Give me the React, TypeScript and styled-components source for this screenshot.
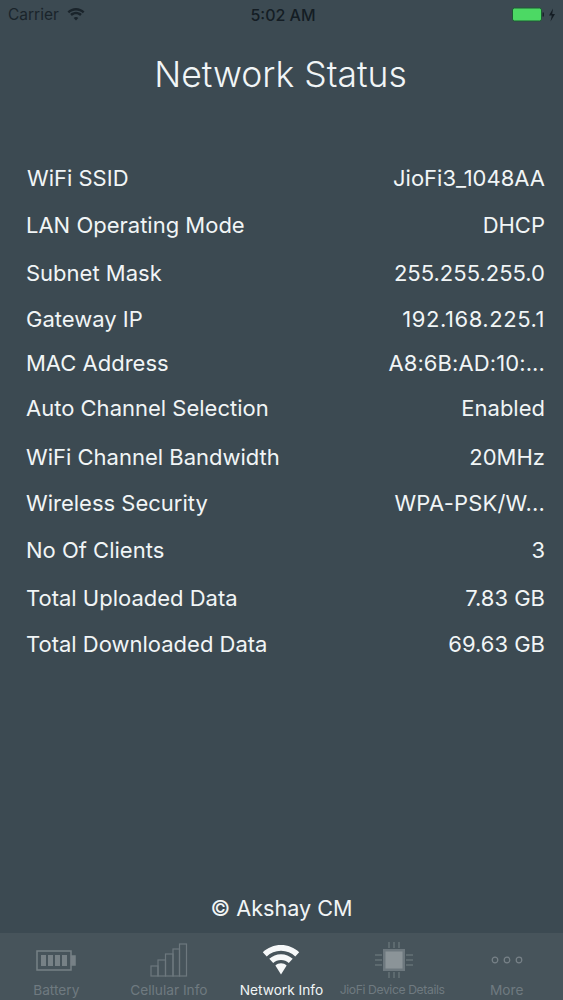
import React, { ReactElement } from 'react'
import styled, { createGlobalStyle } from 'styled-components'

const GlobalStyle = createGlobalStyle`
    html, body {
        margin: 0;
        padding: 0;
        background: #3c4a52;
    }
`

interface Stat {
    label: string;
    value: string;
    height: number;
    spacing?: number;
}

const stats: Stat[] = [
    { label: 'WiFi SSID', value: 'JioFi3_1048AA', height: 47 },
    { label: 'LAN Operating Mode', value: 'DHCP', height: 48 },
    { label: 'Subnet Mask', value: '255.255.255.0', height: 46 },
    { label: 'Gateway IP', value: '192.168.225.1', height: 44, spacing: 0.55 },
    { label: 'MAC Address', value: 'A8:6B:AD:10:...', height: 45, spacing: 0.1 },
    { label: 'Auto Channel Selection', value: 'Enabled', height: 49 },
    { label: 'WiFi Channel Bandwidth', value: '20MHz', height: 46 },
    { label: 'Wireless Security', value: 'WPA-PSK/W...', height: 47, spacing: 0.2 },
    { label: 'No Of Clients', value: '3', height: 48 },
    { label: 'Total Uploaded Data', value: '7.83 GB', height: 46 },
    { label: 'Total Downloaded Data', value: '69.63 GB', height: 45 },
]

const Page = styled.div`
    width: 563px;
    height: 1000px;
    display: flex;
    flex-direction: column;
    overflow: hidden;
    background: #3c4a52;
    font-family: Inter, "Liberation Sans", sans-serif;
    color: #f1f5f6;
`
const StatusBar = styled.div`
    height: 29px;
    display: grid;
    grid-template-columns: 1fr auto 1fr;
    align-items: center;
    padding: 0 5px 0 8px;
    color: #141d24;
    font-size: 15.5px;
`
const Carrier = styled.div`
    display: flex;
    align-items: center;
    gap: 8px;
    color: #1a242b;
`
const Time = styled.div`
    font-size: 16px;
    font-weight: 500;
`
const BatteryArea = styled.div`
    display: flex;
    justify-content: flex-end;
    align-items: center;
`
const Title = styled.h1`
    margin: 21px 0 0;
    padding-right: 2px;
    height: 50px;
    line-height: 50px;
    text-align: center;
    font-size: 35.5px;
    font-weight: 300;
`
const StatList = styled.div`
    margin-top: 63px;
    display: flex;
    flex-direction: column;
    padding: 0 18px 0 26px;
`
const StatRow = styled.div<{ $height: number }>`
    height: ${p => p.$height}px;
    display: flex;
    justify-content: space-between;
    font-size: 22px;
    line-height: 30px;

    &:first-child {
        padding-left: 1px;
    }
`
const StatValue = styled.span<{ $spacing?: number }>`
    letter-spacing: ${p => p.$spacing ?? 0}px;
`
const Footer = styled.div`
    margin-top: auto;
    height: 50px;
    line-height: 50px;
    text-align: center;
    font-size: 21.6px;
`
const TabBar = styled.div`
    height: 67px;
    display: grid;
    grid-template-columns: repeat(5, 1fr);
    background: #47545b;
`
const Tab = styled.div<{ $active?: boolean }>`
    display: flex;
    flex-direction: column;
    align-items: center;
    justify-content: flex-end;
    padding-bottom: 1px;
    color: ${p => (p.$active ? '#f1f5f6' : '#6f7a80')};
`
const TabIcon = styled.div`
    height: 42px;
    display: flex;
    align-items: center;
    justify-content: center;
`
const TabLabel = styled.div`
    font-size: 13.7px;
    line-height: 18px;
    white-space: nowrap;
`
const NarrowLabel = styled(TabLabel)`
    font-size: 12.2px;
    letter-spacing: -0.4px;
    margin-right: 4px;
`

function StatusWifi(): ReactElement {
    return (
        <svg width="18" height="13" viewBox="0 0 18 13" fill="currentColor">
            <path d="M9 2.600c2.600 0 5 1 6.800 2.700L17.500 3.500C15.200 1.300 12.200 0 9 0S2.800 1.300.5 3.500l1.700 1.800C4 3.600 6.400 2.600 9 2.600z" />
            <path d="M9 6.300c1.600 0 3 .6 4.100 1.600l1.700-1.800C13.300 4.700 11.200 3.800 9 3.800s-4.300.9-5.800 2.300l1.700 1.800C6 6.900 7.400 6.300 9 6.300z" />
            <path d="M9 9c-.9 0-1.700.3-2.300.9L9 12.500l2.300-2.600C10.700 9.300 9.900 9 9 9z" />
        </svg>
    )
}

function StatusBattery(): ReactElement {
    return (
        <svg width="46" height="16" viewBox="0 0 46 16">
            <rect x="0.500" y="1" width="29" height="13" rx="2" fill="#4cd964" stroke="#1e5a34" />
            <rect x="30.500" y="5.500" width="1.500" height="4" fill="#1a242b" />
            <path d="M41 1.500l-4 7h2.800L38.500 14.500l4.500-7.500h-2.800z" fill="#141d24" />
        </svg>
    )
}

function BatteryIcon(): ReactElement {
    return (
        <svg width="40" height="21" viewBox="0 0 40 21" fill="none" stroke="#778186" strokeWidth="1.500">
            <rect x="1" y="1" width="34" height="19" />
            <rect x="35.500" y="6" width="3.500" height="9" fill="#778186" />
            <rect x="5" y="5" width="5" height="11" fill="#778186" stroke="none" />
            <rect x="12" y="5" width="5" height="11" fill="#778186" stroke="none" />
            <rect x="19" y="5" width="5" height="11" fill="#778186" stroke="none" />
            <rect x="26" y="5" width="5" height="11" fill="#778186" stroke="none" />
        </svg>
    )
}

function CellularIcon(): ReactElement {
    return (
        <svg width="38" height="34" viewBox="0 0 38 34" fill="none" stroke="#6d787e" strokeWidth="1.200">
            <rect x="1" y="23" width="7" height="10" />
            <rect x="8" y="17" width="7.500" height="16" />
            <rect x="15.500" y="11" width="7.500" height="22" />
            <rect x="23" y="6" width="6.500" height="27" />
            <rect x="29.500" y="1" width="7" height="32" />
        </svg>
    )
}

function WifiIcon(): ReactElement {
    return (
        <svg width="38" height="30" viewBox="0 0 38 30" fill="#f6f8f9">
            <path d="M19 0C12 0 5.600 2.700.8 7.200l3.900 4.200C8.400 7.900 13.400 5.700 19 5.700s10.600 2.200 14.300 5.700l3.900-4.200C32.400 2.700 26 0 19 0z" />
            <path d="M19 9.200c-4.500 0-8.600 1.700-11.700 4.600l3.900 4.200c2-1.900 4.800-3.100 7.800-3.100s5.800 1.200 7.800 3.100l3.900-4.200C27.600 10.900 23.500 9.200 19 9.200z" />
            <path d="M19 18.200c-2.200 0-4.100.8-5.600 2.200L19 29.500l5.600-9.100C23.100 19 21.200 18.200 19 18.200z" />
        </svg>
    )
}

function ChipIcon(): ReactElement {
    return (
        <svg width="40" height="38" viewBox="0 0 40 38" fill="none">
            <rect x="9" y="8" width="22" height="22" fill="#6d787e" />
            <rect x="11.500" y="10.500" width="17" height="17" fill="#8b9498" />
            <path
                d="M15 1v6M20 1v6M25 1v6M15 31v6M20 31v6M25 31v6M1 14h7M1 19h7M1 24h7M32 14h7M32 19h7M32 24h7"
                stroke="#667177"
                strokeWidth="1.500"
            />
        </svg>
    )
}

function DotsIcon(): ReactElement {
    return (
        <svg width="32" height="8" viewBox="0 0 32 8" fill="none" stroke="#788288" strokeWidth="1.200">
            <circle cx="4" cy="4" r="2.800" />
            <circle cx="16" cy="4" r="2.800" />
            <circle cx="28" cy="4" r="2.800" />
        </svg>
    )
}

export default function App(): ReactElement {
    return (
        <Page>
            <GlobalStyle />
            <StatusBar>
                <Carrier>
                    <span>Carrier</span>
                    <StatusWifi />
                </Carrier>
                <Time>5:02 AM</Time>
                <BatteryArea>
                    <StatusBattery />
                </BatteryArea>
            </StatusBar>
            <Title>Network Status</Title>
            <StatList>
                {stats.map(stat => (
                    <StatRow key={stat.label} $height={stat.height}>
                        <span>{stat.label}</span>
                        <StatValue $spacing={stat.spacing}>{stat.value}</StatValue>
                    </StatRow>
                ))}
            </StatList>
            <Footer>© Akshay CM</Footer>
            <TabBar>
                <Tab>
                    <TabIcon><BatteryIcon /></TabIcon>
                    <TabLabel>Battery</TabLabel>
                </Tab>
                <Tab>
                    <TabIcon><CellularIcon /></TabIcon>
                    <TabLabel>Cellular Info</TabLabel>
                </Tab>
                <Tab $active>
                    <TabIcon><WifiIcon /></TabIcon>
                    <TabLabel>Network Info</TabLabel>
                </Tab>
                <Tab>
                    <TabIcon><ChipIcon /></TabIcon>
                    <NarrowLabel>JioFi Device Details</NarrowLabel>
                </Tab>
                <Tab>
                    <TabIcon><DotsIcon /></TabIcon>
                    <TabLabel>More</TabLabel>
                </Tab>
            </TabBar>
        </Page>
    )
}
